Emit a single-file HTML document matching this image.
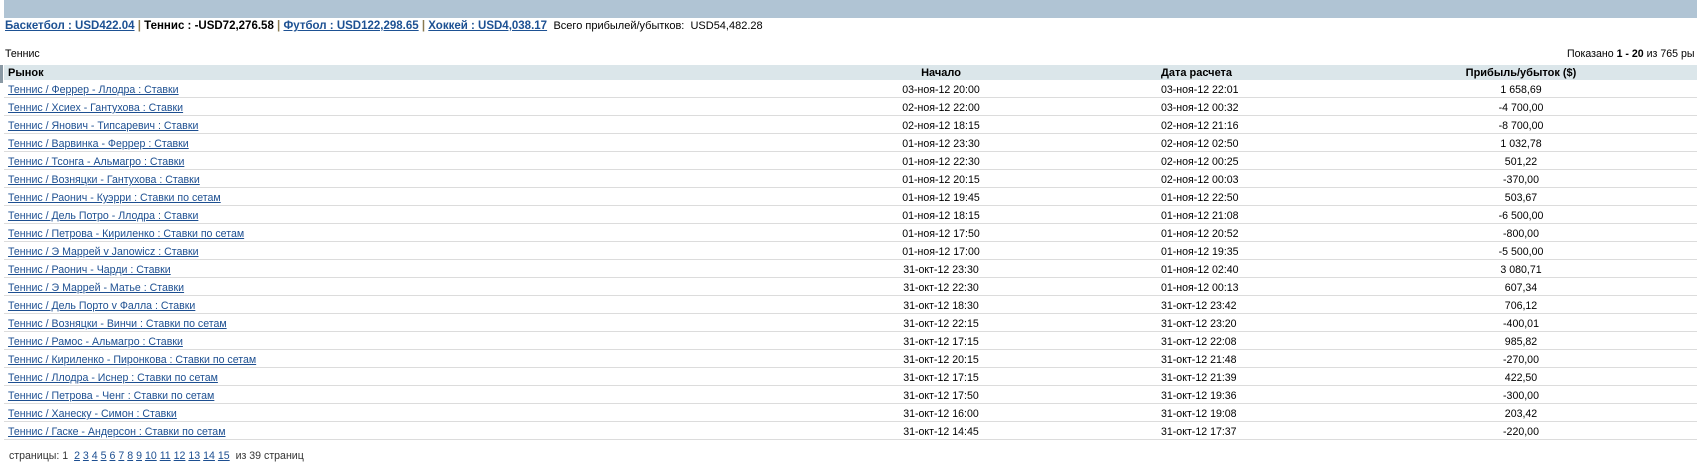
<!DOCTYPE html>
<html><head><meta charset="utf-8"><style>
*{margin:0;padding:0;box-sizing:border-box}
body{width:1697px;height:453px;overflow:hidden;background:#fff;font-family:"Liberation Sans","DejaVu Sans",sans-serif;font-size:10.6px;color:#000;position:relative}
.bar{position:absolute;left:4px;top:0;width:1693px;height:18px;background:#b0c4d4}
.top{position:absolute;left:5px;top:19px;font-size:11.5px;white-space:nowrap;line-height:14px}
.top a{color:#1d5193;text-decoration:underline;font-weight:bold}
.top b{font-weight:bold}
.sep{color:#8a7a50;font-weight:bold}
a{color:#1d4f91;text-decoration:underline}
.lbl{position:absolute;left:5px;top:48px}
.shown{position:absolute;left:1567px;top:48px;white-space:nowrap}
.hdr{position:absolute;left:4px;top:65px;width:1693px;height:15px;background:#dbe6ea;font-weight:bold;font-size:11px}
.strip{position:absolute;left:0;top:65px;width:3px;height:18px;background:#8a99a4}
.row{position:absolute;left:4px;width:1693px;height:18px;border-bottom:1px solid #dcdcdc;line-height:16px;padding-top:2px}
.c1{position:absolute;left:4px;white-space:nowrap}
.c2{position:absolute;left:837px;width:200px;text-align:center}
.c3{position:absolute;left:1157px}
.c4{position:absolute;left:1417px;width:200px;text-align:center}
.hdr div{line-height:16px}
.pg{position:absolute;left:9px;top:450px;color:#333;white-space:nowrap}
</style></head><body>
<div class="bar"></div>
<div class="top"><a>Баскетбол : USD422.04</a> <span class="sep">|</span> <b>Теннис : -USD72,276.58</b> <span class="sep">|</span> <a>Футбол : USD122,298.65</a> <span class="sep">|</span> <a>Хоккей : USD4,038.17</a> &nbsp;<span style="font-size:11px">Всего прибылей/убытков: &nbsp;USD54,482.28</span></div>
<div class="lbl">Теннис</div>
<div class="shown">Показано <b>1 - 20</b> из 765 ры</div>
<div class="strip"></div>
<div class="hdr"><div class="c1">Рынок</div><div class="c2">Начало</div><div class="c3">Дата расчета</div><div class="c4">Прибыль/убыток ($)</div></div>
<div class="row" style="top:80px"><div class="c1"><a>Теннис / Феррер - Ллодра : Ставки</a></div><div class="c2">03-ноя-12 20:00</div><div class="c3">03-ноя-12 22:01</div><div class="c4">1 658,69</div></div>
<div class="row" style="top:98px"><div class="c1"><a>Теннис / Хсиех - Гантухова : Ставки</a></div><div class="c2">02-ноя-12 22:00</div><div class="c3">03-ноя-12 00:32</div><div class="c4">-4 700,00</div></div>
<div class="row" style="top:116px"><div class="c1"><a>Теннис / Янович - Типсаревич : Ставки</a></div><div class="c2">02-ноя-12 18:15</div><div class="c3">02-ноя-12 21:16</div><div class="c4">-8 700,00</div></div>
<div class="row" style="top:134px"><div class="c1"><a>Теннис / Варвинка - Феррер : Ставки</a></div><div class="c2">01-ноя-12 23:30</div><div class="c3">02-ноя-12 02:50</div><div class="c4">1 032,78</div></div>
<div class="row" style="top:152px"><div class="c1"><a>Теннис / Тсонга - Альмагро : Ставки</a></div><div class="c2">01-ноя-12 22:30</div><div class="c3">02-ноя-12 00:25</div><div class="c4">501,22</div></div>
<div class="row" style="top:170px"><div class="c1"><a>Теннис / Возняцки - Гантухова : Ставки</a></div><div class="c2">01-ноя-12 20:15</div><div class="c3">02-ноя-12 00:03</div><div class="c4">-370,00</div></div>
<div class="row" style="top:188px"><div class="c1"><a>Теннис / Раонич - Куэрри : Ставки по сетам</a></div><div class="c2">01-ноя-12 19:45</div><div class="c3">01-ноя-12 22:50</div><div class="c4">503,67</div></div>
<div class="row" style="top:206px"><div class="c1"><a>Теннис / Дель Потро - Ллодра : Ставки</a></div><div class="c2">01-ноя-12 18:15</div><div class="c3">01-ноя-12 21:08</div><div class="c4">-6 500,00</div></div>
<div class="row" style="top:224px"><div class="c1"><a>Теннис / Петрова - Кириленко : Ставки по сетам</a></div><div class="c2">01-ноя-12 17:50</div><div class="c3">01-ноя-12 20:52</div><div class="c4">-800,00</div></div>
<div class="row" style="top:242px"><div class="c1"><a>Теннис / Э Маррей v Janowicz : Ставки</a></div><div class="c2">01-ноя-12 17:00</div><div class="c3">01-ноя-12 19:35</div><div class="c4">-5 500,00</div></div>
<div class="row" style="top:260px"><div class="c1"><a>Теннис / Раонич - Чарди : Ставки</a></div><div class="c2">31-окт-12 23:30</div><div class="c3">01-ноя-12 02:40</div><div class="c4">3 080,71</div></div>
<div class="row" style="top:278px"><div class="c1"><a>Теннис / Э Маррей - Матье : Ставки</a></div><div class="c2">31-окт-12 22:30</div><div class="c3">01-ноя-12 00:13</div><div class="c4">607,34</div></div>
<div class="row" style="top:296px"><div class="c1"><a>Теннис / Дель Порто v Фалла : Ставки</a></div><div class="c2">31-окт-12 18:30</div><div class="c3">31-окт-12 23:42</div><div class="c4">706,12</div></div>
<div class="row" style="top:314px"><div class="c1"><a>Теннис / Возняцки - Винчи : Ставки по сетам</a></div><div class="c2">31-окт-12 22:15</div><div class="c3">31-окт-12 23:20</div><div class="c4">-400,01</div></div>
<div class="row" style="top:332px"><div class="c1"><a>Теннис / Рамос - Альмагро : Ставки</a></div><div class="c2">31-окт-12 17:15</div><div class="c3">31-окт-12 22:08</div><div class="c4">985,82</div></div>
<div class="row" style="top:350px"><div class="c1"><a>Теннис / Кириленко - Пиронкова : Ставки по сетам</a></div><div class="c2">31-окт-12 20:15</div><div class="c3">31-окт-12 21:48</div><div class="c4">-270,00</div></div>
<div class="row" style="top:368px"><div class="c1"><a>Теннис / Ллодра - Иснер : Ставки по сетам</a></div><div class="c2">31-окт-12 17:15</div><div class="c3">31-окт-12 21:39</div><div class="c4">422,50</div></div>
<div class="row" style="top:386px"><div class="c1"><a>Теннис / Петрова - Ченг : Ставки по сетам</a></div><div class="c2">31-окт-12 17:50</div><div class="c3">31-окт-12 19:36</div><div class="c4">-300,00</div></div>
<div class="row" style="top:404px"><div class="c1"><a>Теннис / Ханеску - Симон : Ставки</a></div><div class="c2">31-окт-12 16:00</div><div class="c3">31-окт-12 19:08</div><div class="c4">203,42</div></div>
<div class="row" style="top:422px"><div class="c1"><a>Теннис / Гаске - Андерсон : Ставки по сетам</a></div><div class="c2">31-окт-12 14:45</div><div class="c3">31-окт-12 17:37</div><div class="c4">-220,00</div></div>
<div class="pg">страницы: 1 &nbsp;<a>2</a> <a>3</a> <a>4</a> <a>5</a> <a>6</a> <a>7</a> <a>8</a> <a>9</a> <a>10</a> <a>11</a> <a>12</a> <a>13</a> <a>14</a> <a>15</a> &nbsp;из 39 страниц</div>
</body></html>
